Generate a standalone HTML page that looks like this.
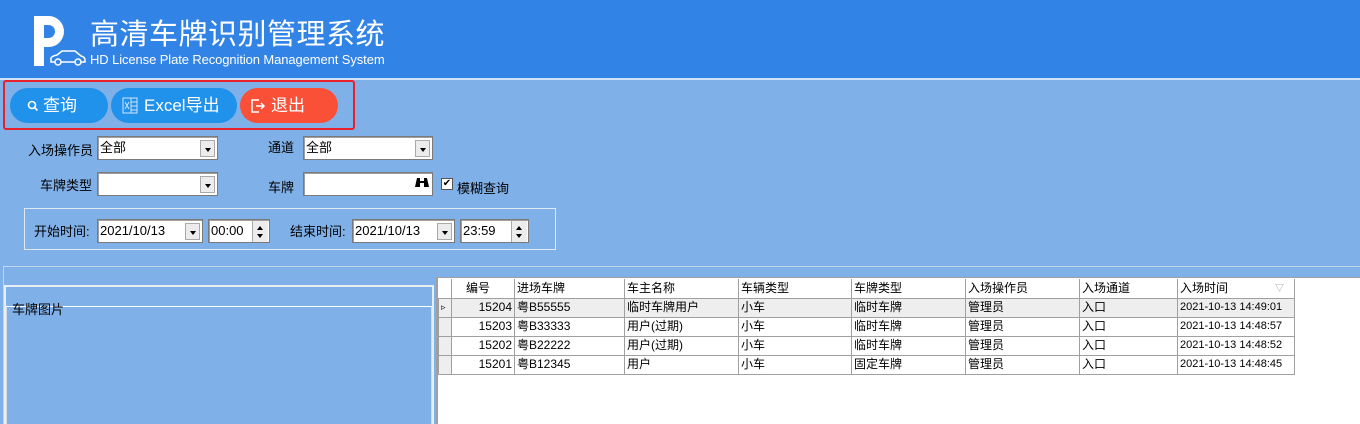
<!DOCTYPE html>
<html><head><meta charset="utf-8"><style>
*{margin:0;padding:0;box-sizing:border-box}
body{width:1360px;height:424px;overflow:hidden;background:#80b0e8;font-family:"Liberation Sans","Noto Sans CJK SC",sans-serif;position:relative;font-size:12px;color:#000}
.a{position:absolute}
.hdr{left:0;top:0;width:1360px;height:80px;background:#3183e6;border-bottom:2px solid #cfe3fa}
.btn{position:absolute;top:88px;height:35px;border-radius:18px;color:#fff;font-size:17px;line-height:35px}
.lbl{position:absolute;font-size:13px;white-space:nowrap}
.inp{position:absolute;background:#fff;border:1px solid #7a7a7a;box-shadow:inset 1px 1px 0 #a0a0a0;font-size:13px;line-height:22px;padding-left:2px;height:24px}
.dd{position:absolute;right:2px;top:3px;width:15px;height:17px;background:#ececec;border:1px solid #aaa}
.dd:after{content:"";position:absolute;left:4px;top:7px;border:3px solid transparent;border-top:4px solid #000}
.spin{position:absolute;right:1px;top:1px;width:16px;height:21px;background:#ececec;border-left:1px solid #aaa}
.spin:before{content:"";position:absolute;left:4px;top:2px;border:3px solid transparent;border-bottom:4px solid #000}
.spin:after{content:"";position:absolute;left:4px;top:13px;border:3px solid transparent;border-top:4px solid #000}
table{border-collapse:collapse;font-size:12px}
td{border:1px solid #a0a0a0;height:19px;padding:0 2px;white-space:nowrap;line-height:17px}
</style></head><body>
<div class="a hdr"></div>
<div class="a" style="left:34px;top:16px;width:10px;height:50px;background:#fff"></div>
<div class="a" style="left:38px;top:16px;width:26px;height:31px;border:9px solid #fff;border-left:none;border-radius:0 16px 16px 0"></div>
<svg class="a" style="left:48px;top:48px" width="40" height="20" viewBox="0 0 40 20"><path d="M3 14 L3 10 Q4 8 9 7 L14 3 L27 3 L33 8 Q37 9 37 12 L37 14 Z" fill="#3183e6" stroke="#fff" stroke-width="1.5"/><circle cx="10" cy="14" r="3" fill="#3183e6" stroke="#fff" stroke-width="1.5"/><circle cx="30" cy="14" r="3" fill="#3183e6" stroke="#fff" stroke-width="1.5"/></svg>
<div class="a" style="left:90px;top:17px;color:#fff;font-size:29px;line-height:36px;letter-spacing:0.5px">高清车牌识别管理系统</div>
<div class="a" style="left:90px;top:53px;color:#fff;font-size:13px;line-height:14px;letter-spacing:-0.1px">HD License Plate Recognition Management System</div>
<div class="a" style="left:3px;top:80px;width:352px;height:50px;border:2px solid #e8202a;border-radius:3px"></div>
<div class="btn" style="left:10px;width:98px;background:#2192ec"><svg class="a" style="left:17px;top:12px" width="12" height="12" viewBox="0 0 12 12"><circle cx="5" cy="5" r="3.5" fill="none" stroke="#fff" stroke-width="1.6"/><path d="M7.5 7.5L10.5 10.5" stroke="#fff" stroke-width="1.6"/></svg><span style="position:absolute;left:33px">查询</span></div>
<div class="btn" style="left:111px;width:126px;background:#2192ec"><svg class="a" style="left:11px;top:9px" width="16" height="17" viewBox="0 0 16 17"><rect x="1" y="1" width="14" height="15" fill="none" stroke="#cfe4fb"/><path d="M9 1V16M9 5H15M9 9H15M9 13H15M3 5L7 12M7 5L3 12" stroke="#cfe4fb" fill="none"/></svg><span style="position:absolute;left:33px">Excel导出</span></div>
<div class="btn" style="left:240px;width:98px;background:#fb5038"><svg class="a" style="left:10px;top:10px" width="16" height="16" viewBox="0 0 16 16"><path d="M9 2H2V14H9M6 8H14M11 5L14 8L11 11" stroke="#fff" stroke-width="1.5" fill="none"/></svg><span style="position:absolute;left:31px">退出</span></div>

<div class="lbl" style="left:28px;top:140px">入场操作员</div>
<div class="inp" style="left:97px;top:136px;width:121px">全部<div class="dd"></div></div>
<div class="lbl" style="left:268px;top:137px">通道</div>
<div class="inp" style="left:303px;top:136px;width:130px">全部<div class="dd"></div></div>
<div class="lbl" style="left:40px;top:175px">车牌类型</div>
<div class="inp" style="left:97px;top:172px;width:121px"><div class="dd"></div></div>
<div class="lbl" style="left:268px;top:177px">车牌</div>
<div class="inp" style="left:303px;top:172px;width:130px"><svg class="a" style="right:3px;top:3px" width="14" height="12" viewBox="0 0 14 12"><path d="M2 2h3v3h4V2h3l2 9H9V7H5v4H0z" fill="#000"/></svg></div>
<div class="a" style="left:441px;top:178px;width:12px;height:12px;background:#fff;border:1px solid #555;font-size:10px;line-height:10px;text-align:center">✔</div>
<div class="lbl" style="left:457px;top:178px">模糊查询</div>

<div class="a" style="left:24px;top:208px;width:532px;height:42px;border:1px solid #dfe9f5"></div>
<div class="lbl" style="left:34px;top:221px">开始时间:</div>
<div class="inp" style="left:97px;top:219px;width:106px">2021/10/13<div class="dd"></div></div>
<div class="inp" style="left:208px;top:219px;width:62px">00:00<div class="spin"></div></div>
<div class="lbl" style="left:290px;top:221px">结束时间:</div>
<div class="inp" style="left:352px;top:219px;width:103px">2021/10/13<div class="dd"></div></div>
<div class="inp" style="left:460px;top:219px;width:69px">23:59<div class="spin"></div></div>

<div class="a" style="left:3px;top:266px;width:1357px;height:2px;border-top:1px solid #c0d4ec"></div>
<div class="a" style="left:3px;top:267px;width:1px;height:157px;background:#c0d4ec"></div>
<div class="a" style="left:4px;top:285px;width:430px;height:139px;border:2px solid #e8eef5;border-bottom:none"></div>
<div class="a" style="left:6px;top:306px;width:426px;height:118px;border-top:1px solid #fff;border-left:1px solid #ddd;border-right:1px solid #ddd"></div>
<div class="lbl" style="left:12px;top:299px">车牌图片</div>

<div class="a" style="left:436px;top:277px;width:924px;height:147px;background:#fff;border-left:2px solid #a0a0a0;border-top:1px solid #a0a0a0"></div>
<table class="a" style="left:438px;top:279px">
<tr style="background:#fff"><td style="width:13px;border-top:none;border-left:none"></td><td style="width:63px;border-top:none;padding-left:14px">编号</td><td style="width:110px;border-top:none">进场车牌</td><td style="width:114px;border-top:none">车主名称</td><td style="width:113px;border-top:none">车辆类型</td><td style="width:114px;border-top:none">车牌类型</td><td style="width:114px;border-top:none">入场操作员</td><td style="width:98px;border-top:none">入场通道</td><td style="width:117px;border-top:none">入场时间 <span style="float:right;color:#999;font-size:9px;margin-right:8px">▽</span></td></tr>
<tr style="background:#eeeeee"><td style="background:#eee;font-size:9px">▹</td><td style="text-align:right">15204</td><td>粤B55555</td><td>临时车牌用户</td><td>小车</td><td>临时车牌</td><td>管理员</td><td>入口</td><td style="font-size:11px">2021-10-13 14:49:01</td></tr>
<tr><td style="background:#eee"></td><td style="text-align:right">15203</td><td>粤B33333</td><td>用户(过期)</td><td>小车</td><td>临时车牌</td><td>管理员</td><td>入口</td><td style="font-size:11px">2021-10-13 14:48:57</td></tr>
<tr><td style="background:#eee"></td><td style="text-align:right">15202</td><td>粤B22222</td><td>用户(过期)</td><td>小车</td><td>临时车牌</td><td>管理员</td><td>入口</td><td style="font-size:11px">2021-10-13 14:48:52</td></tr>
<tr><td style="background:#eee"></td><td style="text-align:right">15201</td><td>粤B12345</td><td>用户</td><td>小车</td><td>固定车牌</td><td>管理员</td><td>入口</td><td style="font-size:11px">2021-10-13 14:48:45</td></tr>
</table>
</body></html>
